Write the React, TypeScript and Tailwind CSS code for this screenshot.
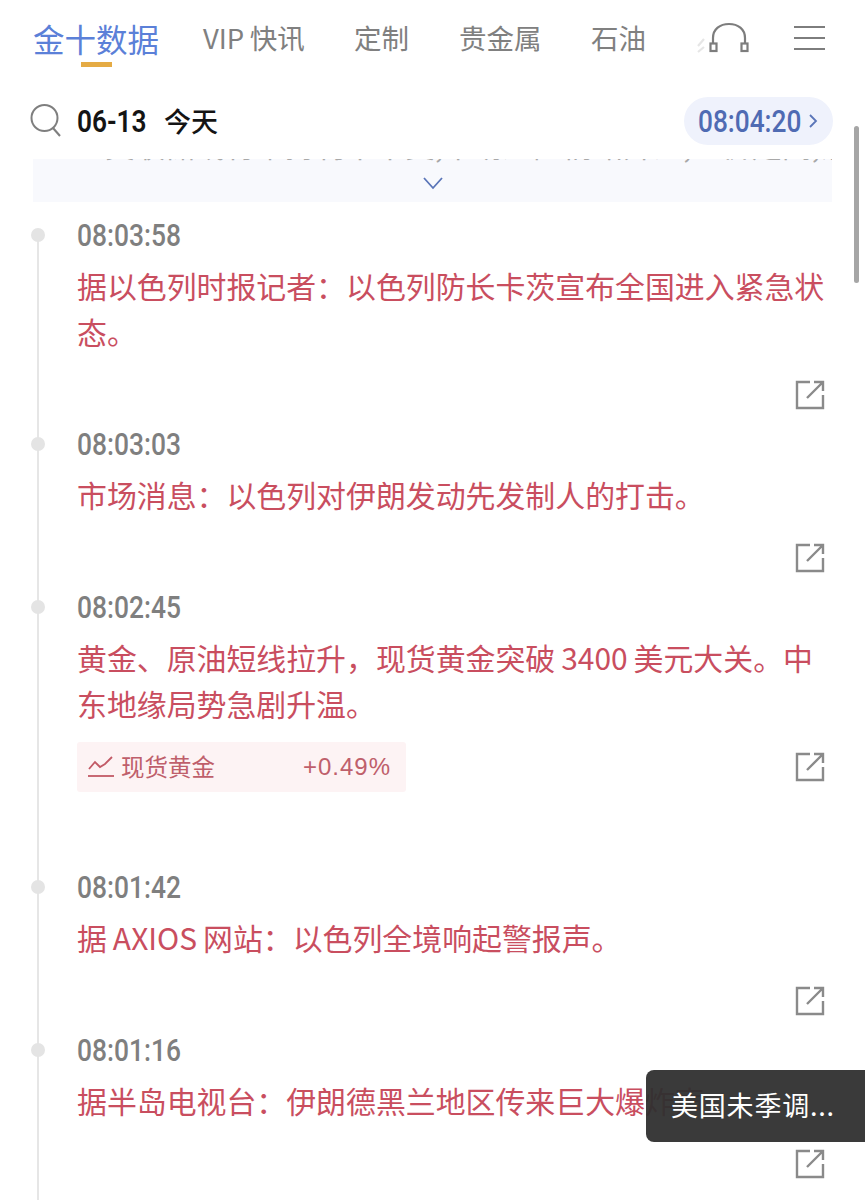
const FONT = '"Noto Sans CJK SC", "Noto Sans", sans-serif';

const tabs = [
  { label: 'VIP\u2009快讯', cls: 'w-[101px] ml-[44px]' },
  { label: '定制', cls: 'w-[56px] ml-[50px]' },
  { label: '贵金属', cls: 'w-[82px] ml-[49px]' },
  { label: '石油', cls: 'w-[56px] ml-[50px]' },
];

const news = [
  { time: '08:03:58', lines: ['据以色列时报记者\uFF1A以色列防长卡茨宣布全国进入紧急状', '态。'] },
  { time: '08:03:03', lines: ['市场消息\uFF1A以色列对伊朗发动先发制人的打击。'] },
  {
    time: '08:02:45',
    lines: ['黄金、原油短线拉升\uFF0C现货黄金突破\u20093400\u2009美元大关。中', '东地缘局势急剧升温。'],
    chip: { name: '现货黄金', value: '+0.49%' },
  },
  { time: '08:01:42', lines: ['据\u2009AXIOS\u2009网站\uFF1A以色列全境响起警报声。'] },
  { time: '08:01:16', lines: ['据半岛电视台\uFF1A伊朗德黑兰地区传来巨大爆炸声'] },
];

function ShareIcon() {
  return (
    <svg width="30" height="30" viewBox="0 0 30 30" fill="none" stroke="#8a8a8a" strokeWidth="2.4">
      <path d="M15 2H2v26h26V15" />
      <path d="M12 18 28 2M19 2h9v9" />
    </svg>
  );
}

function NewsItem({ item }: { item: (typeof news)[number] }) {
  return (
    <div className="relative pl-[77px] pr-[40px]">
      <div className="absolute left-[31px] top-[13px] w-[14px] h-[14px] rounded-full bg-[#e4e4e4]" />
      <div className="h-[40px] leading-[40px] text-[32px] font-medium text-[#7f7f7f] origin-left scale-x-[0.825] whitespace-nowrap" style={{ fontFamily: 'Roboto, sans-serif' }}>
        {item.time}
      </div>
      <div className="mt-[7px] text-[#c94e5f] text-[29.9px] leading-[46px]">
        {item.lines.map((l) => (
          <div key={l} className="whitespace-nowrap">{l}</div>
        ))}
      </div>
      {item.chip ? (
        <div className="mt-[16px] pb-[75px] flex justify-between items-center">
          <div className="w-[329px] h-[50px] bg-[#fdf3f4] rounded-[3px] flex items-center pl-[11px] pr-[15px] text-[#bf5f6b]">
            <svg width="26" height="24" viewBox="0 0 26 24" fill="none" stroke="#c25a66" strokeWidth="1.8">
              <path d="M1 14 7 7l5 5 5-3 7-7" />
              <path d="M0 21h26" />
            </svg>
            <span className="ml-[7px] text-[23.5px]">{item.chip.name}</span>
            <span className="ml-auto text-[24px] tracking-[1px]" style={{ fontFamily: '"Liberation Sans", sans-serif' }}>{item.chip.value}</span>
          </div>
          <ShareIcon />
        </div>
      ) : (
        <div className="mt-[26px] pb-[14px] flex justify-end">
          <ShareIcon />
        </div>
      )}
    </div>
  );
}

export default function App() {
  return (
    <div className="relative w-[865px] h-[1200px] overflow-hidden bg-white" style={{ fontFamily: FONT }}>
      {/* top tabs */}
      <div className="relative h-[76px] flex items-start pl-[33px]">
        <div className="relative w-[126px] mt-[18px] text-[31.5px] leading-[40px] text-[#5b80d8] whitespace-nowrap">
          金十数据
          <div className="absolute left-[48px] top-[44px] w-[31px] h-[5px] bg-[#e5ab44]" />
        </div>
        {tabs.map((t) => (
          <div key={t.label} className={`${t.cls} mt-[17px] text-[27.5px] leading-[40px] text-[#808080] whitespace-nowrap`}>
            {t.label}
          </div>
        ))}
        <svg className="absolute left-[695px] top-[21px]" width="60" height="32" viewBox="0 0 60 32" fill="none" stroke="#7d7d7d" strokeWidth="2.2">
          <path d="M3 25 9 18M3 31 9 26" stroke="#e6e6e6" />
          <path d="M18 22V17C18 8 25 3 34 3s16 5 16 14v5" />
          <rect x="15.5" y="22.5" width="6" height="7.5" />
          <rect x="46.5" y="22.5" width="6" height="7.5" />
        </svg>
        <svg className="absolute left-[793px] top-[25px]" width="33" height="26" viewBox="0 0 33 26" fill="none" stroke="#7d7d7d" strokeWidth="2">
          <path d="M1 2h31M1 13h31M1 24h31" />
        </svg>
      </div>

      {/* date row */}
      <div className="h-[83px] pt-[7px] flex items-center pl-[30px] pr-[32px]">
        <svg width="32" height="36" viewBox="0 0 32 36" fill="none" stroke="#7f7f7f" strokeWidth="2">
          <circle cx="14.5" cy="15" r="13" />
          <path d="M23 25l7 8" />
        </svg>
        <span className="ml-[15px] w-[87px] text-[32px] leading-[40px] font-semibold text-[#141414] origin-left scale-x-[0.82] whitespace-nowrap" style={{ fontFamily: 'Roboto, sans-serif' }}>
          06-13
        </span>
        <span className="text-[27px] leading-[40px] font-medium text-[#141414] whitespace-nowrap">今天</span>
        <div className="ml-auto w-[149px] h-[48px] rounded-full bg-[#eff2fc] flex items-center pl-[14px] text-[#4f6bb3]">
          <span className="text-[32px] font-medium origin-left scale-x-[0.82] w-[110px] whitespace-nowrap" style={{ fontFamily: 'Roboto, sans-serif' }}>08:04:20</span>
          <svg width="10" height="16" viewBox="0 0 10 16" fill="none" stroke="#5a75b8" strokeWidth="1.8">
            <path d="M2 2l6 6-6 6" />
          </svg>
        </div>
      </div>

      {/* collapsed flash */}
      <div className="mx-[33px] h-[43px] bg-[#f8f9fd] relative overflow-hidden flex justify-center">
        <div className="absolute left-[72px] top-[-30px] text-[30px] leading-[30px] text-[#a8a8a8] whitespace-nowrap">
          美联储或将维持利率不变,市场避险情绪升温,金价走高,油价
        </div>
        <svg className="mt-[17px]" width="22" height="14" viewBox="0 0 22 14" fill="none" stroke="#5a75b8" strokeWidth="1.8">
          <path d="M2 2l9 10 9-10" />
        </svg>
      </div>

      {/* timeline */}
      <div className="relative mt-[13px]">
        <div className="absolute left-[37px] top-[20px] bottom-[-60px] w-[2px] bg-[#e6e6e6]" />
        {news.map((n) => (
          <NewsItem key={n.time} item={n} />
        ))}
      </div>

      {/* scrollbar */}
      <div className="absolute left-[854px] top-[126px] w-[5px] h-[157px] rounded-full bg-[#a6a6a6]" />

      {/* toast */}
      <div className="absolute left-[646px] top-[1070px] w-[219px] h-[72px] rounded-l-[8px] bg-[#2f2f2f]/95 text-white text-[27px] tracking-[0.8px] leading-[70px] pl-[25px] whitespace-nowrap">
        美国未季调...
      </div>
    </div>
  );
}
